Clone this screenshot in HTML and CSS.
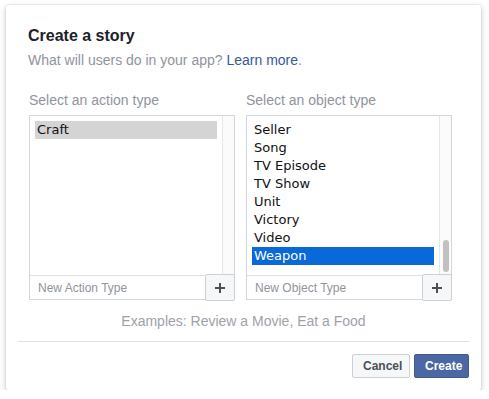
FILE: index.html
```html
<!DOCTYPE html>
<html>
<head>
<meta charset="utf-8">
<link rel="stylesheet" href="styles.css">
</head>
<body>
<div class="dialog">
  <div class="content">
    <h1 class="title">Create a story</h1>
    <p class="subtitle">What will users do in your app? <a class="link" href="#">Learn more</a>.</p>
    <div class="pickers">
      <div class="picker">
        <div class="label">Select an action type</div>
        <div class="box">
          <div class="list-area">
            <ul class="list">
              <li class="item inactive">Craft</li>
            </ul>
            <div class="track"></div>
          </div>
          <div class="add-row">
            <input class="add-input" type="text" placeholder="New Action Type">
            <button class="add-btn" type="button"><svg width="12" height="12" viewBox="0 0 12 12"><path d="M1 6H11M6 1V11" stroke="#4b4f56" stroke-width="2" fill="none"/></svg></button>
          </div>
        </div>
      </div>
      <div class="picker">
        <div class="label">Select an object type</div>
        <div class="box">
          <div class="list-area">
            <ul class="list">
              <li class="item">Seller</li>
              <li class="item">Song</li>
              <li class="item">TV Episode</li>
              <li class="item">TV Show</li>
              <li class="item">Unit</li>
              <li class="item">Victory</li>
              <li class="item">Video</li>
              <li class="item active">Weapon</li>
            </ul>
            <div class="track"><div class="thumb"></div></div>
          </div>
          <div class="add-row">
            <input class="add-input" type="text" placeholder="New Object Type">
            <button class="add-btn" type="button"><svg width="12" height="12" viewBox="0 0 12 12"><path d="M1 6H11M6 1V11" stroke="#4b4f56" stroke-width="2" fill="none"/></svg></button>
          </div>
        </div>
      </div>
    </div>
    <p class="examples">Examples: Review a Movie, Eat a Food</p>
  </div>
  <div class="footer">
    <button class="btn cancel" type="button">Cancel</button>
    <button class="btn create" type="button">Create</button>
  </div>
</div>
</body>
</html>
```
FILE: styles.css
```css
* { box-sizing: border-box; }
html, body { margin: 0; padding: 0; background: #ffffff; }
body {
  font-family: "Liberation Sans", Arial, Helvetica, sans-serif;
  font-size: 14px;
  color: #1d2129;
}
.dialog {
  margin: 5px 0 0 6px;
  width: 475px;
  height: 385px;
  padding: 21px 12px 12px;
  background: #fff;
  border-radius: 3px;
  box-shadow: 0 2px 6px rgba(0,0,0,0.22), 0 0 0 1px rgba(0,0,0,0.04);
}
.content { padding: 0 10px; }
.title {
  margin: 0;
  font-size: 16px;
  line-height: 20px;
  font-weight: bold;
  color: #1d2129;
}
.subtitle {
  margin: 5px 0 0;
  line-height: 18px;
  color: #90949c;
}
.link { color: #365899; text-decoration: none; }
.pickers {
  margin: 22px 0 0 1px;
  display: flex;
  gap: 11px;
}
.picker { width: 206px; }
.label { line-height: 18px; color: #90949c; }
.box {
  margin-top: 6px;
  border: 1px solid #d3d6db;
  height: 185px;
  display: flex;
  flex-direction: column;
}
.list-area {
  height: 160px;
  display: flex;
}
.list {
  list-style: none;
  margin: 0;
  padding: 5px;
  flex: 1;
  overflow: hidden;
}
.item {
  font-family: "DejaVu Sans", sans-serif;
  font-size: 13px;
  line-height: 18px;
  height: 18px;
  padding-left: 2px;
  color: #111;
  white-space: nowrap;
}
.item.inactive { background: #d4d4d4; }
.item.active { background: #0a69d8; color: #fff; }
.track {
  width: 12px;
  border-left: 1px solid #e6e6e6;
  background: #fbfbfb;
  display: flex;
  flex-direction: column;
  justify-content: flex-end;
  align-items: center;
  padding-bottom: 3px;
}
.thumb {
  width: 6px;
  height: 32px;
  border-radius: 3px;
  background: #c1c1c1;
}
.add-row {
  display: flex;
  height: 24px;
  border-top: 1px solid #dddfe2;
}
.add-input {
  flex: 1;
  min-width: 0;
  border: 0;
  outline: none;
  padding: 0 8px;
  font-family: "Liberation Sans", Arial, sans-serif;
  font-size: 12px;
  color: #1d2129;
  background: transparent;
}
.add-input::placeholder { color: #90949c; }
.add-btn {
  width: 30px;
  margin: -2px -1px -2px 0;
  padding: 0;
  border: 1px solid #ccd0d5;
  border-radius: 2px;
  background: #f6f7f9;
  display: flex;
  align-items: center;
  justify-content: center;
}
.examples {
  margin: 12px 0 0;
  line-height: 18px;
  text-align: center;
  color: #9ea2a8;
}
.footer {
  margin-top: 11px;
  border-top: 1px solid #dddfe2;
  padding-top: 12px;
  display: flex;
  justify-content: flex-end;
  gap: 4px;
}
.btn {
  height: 24px;
  padding: 0 10px;
  border-radius: 2px;
  font-family: "Liberation Sans", Arial, sans-serif;
  font-size: 12px;
  font-weight: bold;
  line-height: 22px;
}
.cancel {
  width: 58px;
  background: #f6f7f9;
  border: 1px solid #ced0d4;
  color: #4b4f56;
}
.create {
  width: 55px;
  background: #4b67a4;
  border: 1px solid #43598c;
  color: #fff;
}
```
